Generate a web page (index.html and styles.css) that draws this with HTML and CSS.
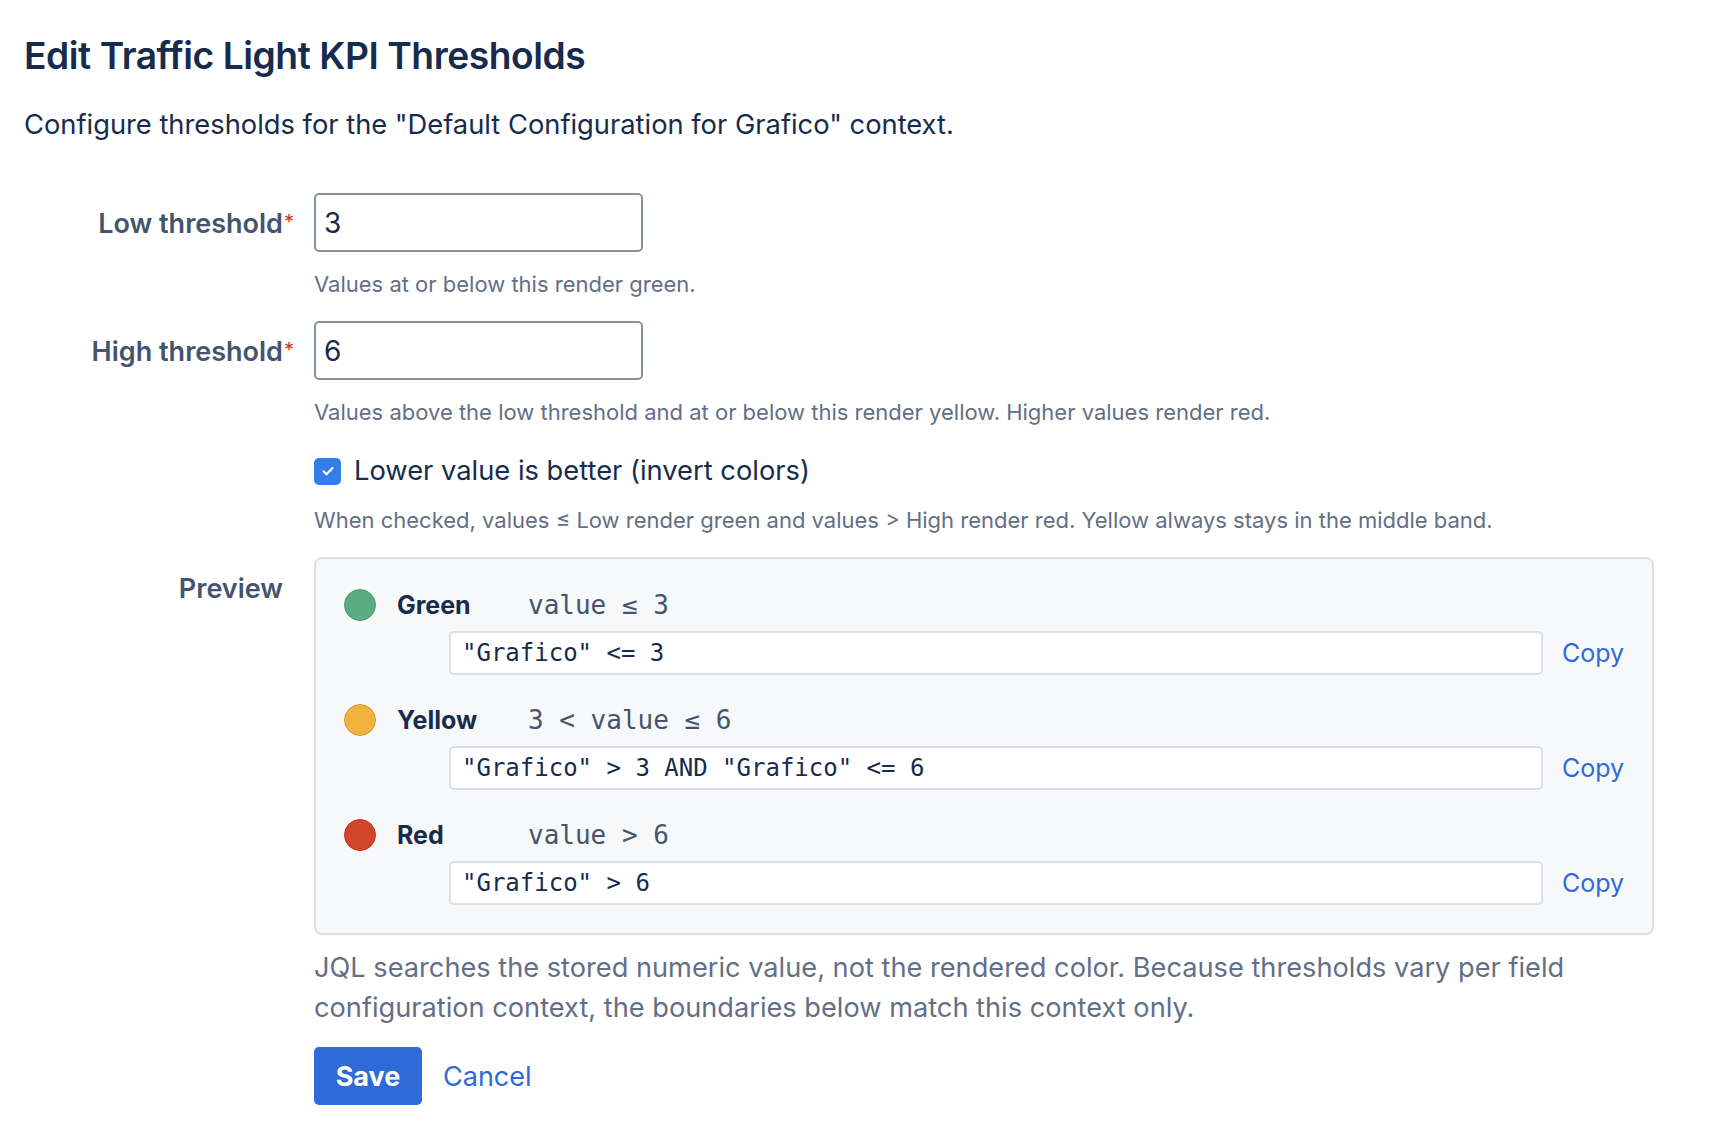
FILE: index.html
```html
<!DOCTYPE html>
<html lang="en">
<head>
    <meta charset="UTF-8">
    <title>Edit Traffic Light KPI Thresholds</title>
    <link rel="stylesheet" href="styles.css">
</head>
<body>
<div class="page">
    <h1 class="title">Edit Traffic Light KPI Thresholds</h1>
    <p class="intro">Configure thresholds for the "Default Configuration for Grafico" context.</p>

    <form class="kpi-form">
        <div class="form-row">
            <label class="field-label" for="low">Low threshold<span class="req">*</span></label>
            <div class="field">
                <input class="text-input" type="text" id="low" value="3">
                <p class="help">Values at or below this render green.</p>
            </div>
        </div>

        <div class="form-row row-high">
            <label class="field-label" for="high">High threshold<span class="req">*</span></label>
            <div class="field">
                <input class="text-input" type="text" id="high" value="6">
                <p class="help">Values above the low threshold and at or below this render yellow. Higher values render red.</p>
            </div>
        </div>

        <div class="form-row">
            <div></div>
            <div class="field">
                <label class="check">
                    <span class="check-box">
                        <svg width="16" height="16" viewBox="0 0 16 16"><path d="M3.5 8.3l3 3 6-6.2" fill="none" stroke="#fff" stroke-width="2.2" stroke-linecap="round" stroke-linejoin="round"/></svg>
                    </span>
                    Lower value is better (invert colors)
                </label>
                <p class="help help-check">When checked, values ≤ Low render green and values &gt; High render red. Yellow always stays in the middle band.</p>
            </div>
        </div>

        <div class="form-row">
            <div class="field-label plain">Preview</div>
            <div class="field">
                <div class="preview">
                    <div class="band">
                        <div class="band-head">
                            <span class="dot dot-green"></span>
                            <span class="band-name">Green</span>
                            <code class="band-range">value ≤ 3</code>
                        </div>
                        <div class="band-jql">
                            <div class="jql">"Grafico" &lt;= 3</div>
                            <a class="copy" href="#">Copy</a>
                        </div>
                    </div>
                    <div class="band">
                        <div class="band-head">
                            <span class="dot dot-yellow"></span>
                            <span class="band-name">Yellow</span>
                            <code class="band-range">3 &lt; value ≤ 6</code>
                        </div>
                        <div class="band-jql">
                            <div class="jql">"Grafico" &gt; 3 AND "Grafico" &lt;= 6</div>
                            <a class="copy" href="#">Copy</a>
                        </div>
                    </div>
                    <div class="band">
                        <div class="band-head">
                            <span class="dot dot-red"></span>
                            <span class="band-name">Red</span>
                            <code class="band-range">value &gt; 6</code>
                        </div>
                        <div class="band-jql">
                            <div class="jql">"Grafico" &gt; 6</div>
                            <a class="copy" href="#">Copy</a>
                        </div>
                    </div>
                </div>
                <p class="note">JQL searches the stored numeric value, not the rendered color. Because thresholds vary per field configuration context, the boundaries below match this context only.</p>
                <div class="actions">
                    <button class="btn-save" type="button">Save</button>
                    <a class="cancel" href="#">Cancel</a>
                </div>
            </div>
        </div>
    </form>
</div>
</body>
</html>
```

FILE: styles.css
```css
* {
    box-sizing: border-box;
    margin: 0;
    padding: 0;
}

body {
    background-color: #fff;
    font-family: Inter, 'Liberation Sans', sans-serif;
    color: #172b4d;
}

.page {
    padding: 32px 24px 0 24px;
}

.title {
    font-size: 37.2px;
    font-weight: 600;
    letter-spacing: -0.45px;
    line-height: 48px;
    color: #172b4d;
}

.intro {
    font-size: 27.3px;
    line-height: 36px;
    margin-top: 27px;
    color: #172b4d;
}

.kpi-form {
    margin-top: 50px;
}

.form-row {
    display: grid;
    grid-template-columns: 272px 1340px;
    column-gap: 18px;
    margin-bottom: 21px;
}

.form-row.row-high {
    margin-bottom: 23px;
}

.field-label {
    text-align: right;
    font-size: 27px;
    font-weight: 600;
    color: #44546f;
    line-height: 58px;
    padding-right: 2px;
}

.field-label.plain {
    padding-right: 13px;
    line-height: 64px;
}

.req {
    color: #c9372c;
    font-size: 20px;
    font-weight: 400;
    vertical-align: 4px;
    margin-left: 1px;
}

.text-input {
    display: block;
    width: 329px;
    height: 59px;
    border: 2px solid #8590a2;
    border-radius: 5px;
    padding: 0 8px;
    font-family: Inter, sans-serif;
    font-size: 28px;
    color: #172b4d;
    outline: none;
}

.help {
    font-size: 22px;
    line-height: 32px;
    color: #626f86;
    margin-top: 16px;
}

.help-check {
    margin-top: 13px;
}

.check {
    display: flex;
    align-items: center;
    gap: 13px;
    font-size: 27.3px;
    line-height: 40px;
    color: #172b4d;
}

.check-box {
    width: 27px;
    height: 27px;
    border-radius: 5px;
    background-color: #357de8;
    display: flex;
    align-items: center;
    justify-content: center;
}

.preview {
    background-color: #f7f8f9;
    border: 2px solid #dcdfe4;
    border-radius: 8px;
    padding: 30px 32px 28px 28px;
    display: flex;
    flex-direction: column;
    gap: 29px;
}

.band-head {
    display: flex;
    align-items: center;
    height: 32px;
}

.dot {
    width: 32px;
    height: 32px;
    border-radius: 50%;
    margin-right: 21px;
}

.dot-green {
    background-color: #5aad80;
    border: 1px solid #4c9a70;
}

.dot-yellow {
    background-color: #f1b13f;
    border: 1px solid #d99a2e;
}

.dot-red {
    background-color: #d1462a;
    border: 1px solid #b83a22;
}

.band-name {
    width: 131px;
    font-size: 25px;
    font-weight: 700;
    color: #172b4d;
}

.band-range {
    font-family: 'DejaVu Sans Mono', monospace;
    font-size: 26px;
    color: #44546f;
}

.band-jql {
    display: flex;
    align-items: center;
    margin-top: 10px;
    padding-left: 105px;
    gap: 19px;
}

.jql {
    flex: 1;
    height: 44px;
    line-height: 40px;
    background-color: #fff;
    border: 2px solid #dcdfe4;
    border-radius: 5px;
    padding: 0 11px;
    font-family: 'DejaVu Sans Mono', monospace;
    font-size: 24px;
    color: #172b4d;
}

.copy {
    font-size: 25px;
    color: #2e6ad8;
    text-decoration: none;
    width: 58px;
}

.note {
    font-size: 27.2px;
    line-height: 40px;
    color: #626f86;
    margin-top: 13px;
}

.actions {
    display: flex;
    align-items: center;
    gap: 21px;
    margin-top: 19px;
}

.btn-save {
    width: 108px;
    height: 58px;
    background-color: #2e6ad8;
    color: #fff;
    border: none;
    border-radius: 5px;
    font-family: Inter, sans-serif;
    font-size: 27px;
    font-weight: 700;
}

.cancel {
    font-size: 27px;
    color: #2e6ad8;
    text-decoration: none;
}
```
